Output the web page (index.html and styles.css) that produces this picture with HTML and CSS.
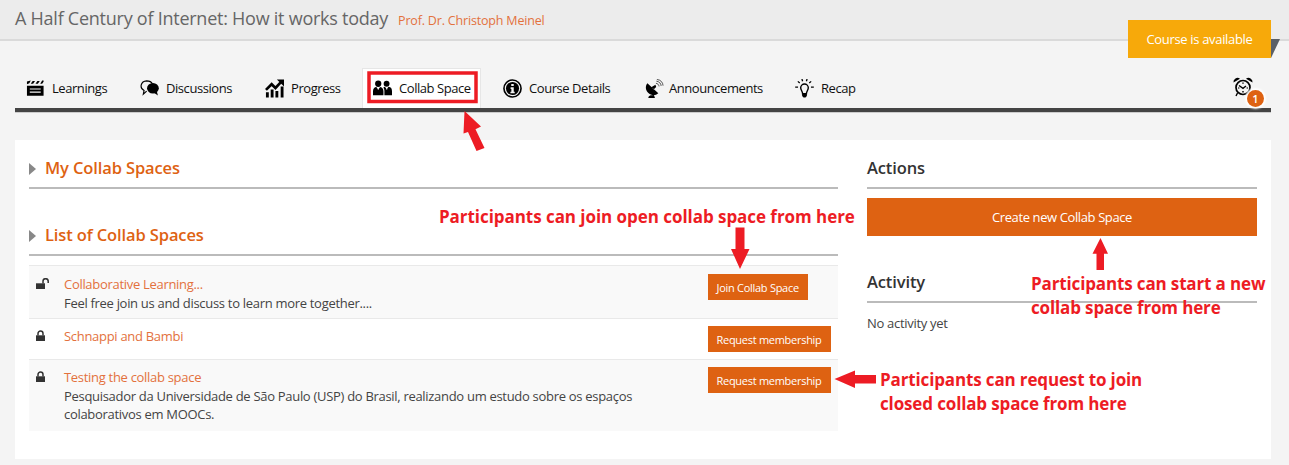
FILE: index.html
```
<!DOCTYPE html>
<html lang="en">
<head>
<meta charset="utf-8">
<title>A Half Century of Internet: How it works today</title>
<link rel="stylesheet" href="styles.css">
</head>
<body>
<header class="course-header">
  <h1 class="course-title">A Half Century of Internet: How it works today</h1>
  <a class="teacher">Prof. Dr. Christoph Meinel</a>
  <div class="ribbon">Course is available</div>
  <i class="ribbon-fold"></i>
</header>

<nav class="course-nav">
  <a class="tab"><svg class="icon" viewBox="0 0 20 20"><path d="M1 7h17.500v10.500H1zM1 2.500l4-1-1.500 3-2.500 1zM7 2h2.500L7.500 5H5zM12 2h2.500l-2 3H10zM17 1.500h1.500V3L17 5h-2z"/><path d="M4 10.500h11.500M4 13.800h11.500" stroke="#f4f4f4" stroke-width="1.100"/></svg>Learnings</a>
  <a class="tab"><svg class="icon" viewBox="0 0 20 20"><path d="M7 12.700 3.500 16l.8-4C-.8 9.500.5 2.500 7 2c3 0 5 1 6 3" fill="none" stroke="#000" stroke-width="1.200"/><ellipse cx="13.600" cy="9.800" rx="6.200" ry="5.500"/><path d="m14 14 4.800 3.300L17.500 12z"/></svg>Discussions</a>
  <a class="tab"><svg class="icon" viewBox="0 0 20 20"><path d="M1 14h3v5.500H1zM6 11h3v8.500H6zM11 12.500h3v7h-3zM16.500 8h3v11.500h-3z"/><path d="m1 11.500 6-6 4 4L17 3" fill="none" stroke="#000" stroke-width="2.800"/><path d="M12.500.5H20V8z"/></svg>Progress</a>
  <a class="tab tab-active"><svg class="icon" viewBox="0 0 20 20"><circle cx="5.500" cy="5" r="3.300"/><circle cx="14.300" cy="5" r="3.100"/><path d="M0 17v-4c0-3 1.500-4.300 3.500-4.500L5.500 11l2-2.500C10 9 11 11 11 13v4zM12 17v-4c0-2-.5-3-1.200-4l1.700-.8 2 2.500 1.800-2.500C19 8.500 20 10 20 13v4z"/><path d="M5.500 9v2.500M14.500 9v2.500" stroke="#fff" stroke-width=".6"/></svg>Collab Space</a>
  <a class="tab"><svg class="icon" viewBox="0 0 20 20"><circle cx="10" cy="10" r="9" fill="none" stroke="#000" stroke-width="1.700"/><circle cx="10" cy="10" r="6.900"/><path d="M8.700 5.300h2.600v2H8.700zM8 8.700h3.300v4.700h1V15H7.800v-1.600h1v-3H8z" fill="#f4f4f4"/></svg>Course Details</a>
  <a class="tab tab-announce"><svg class="icon" viewBox="0 0 20 20"><path d="M2.500 4.500c-4 5 0 12 6 12.500 2.500 0 4-.8 5.500-2zM3.500 20c0-2 1-2.500 2.500-3h3.500l1 3zM7 8.500l4-2.500.8 2.500L9 11z"/><path d="M11.500 4.500c2 .3 3 1.500 3.300 3.300M12 2.300c3 .4 4.800 2.300 5 5M12.500.5c4 .3 6.300 3 6.500 6.500" fill="none" stroke="#222" stroke-width=".8"/></svg>Announcements</a>
  <a class="tab"><svg class="icon" viewBox="0 0 20 20"><path d="M8 15.500c0-2.500-2-3.700-2-6.200a4 4 0 0 1 8 0c0 2.500-2 3.700-2 6.200z" fill="none" stroke="#000" stroke-width="1.500"/><path d="M7.500 15h5v3L11 19.500H9L7.500 18z"/><path d="M.2 8.500h3M16.800 8.500h3M3 2.500l2 1.800M17 2.500l-2 1.800M7.300 0l.7 2.300M12.700 0 12 2.300" stroke="#000" stroke-width="1.400"/></svg>Recap</a>
  <div class="deadline">
    <svg class="clock" viewBox="0 0 20 20"><circle cx="10" cy="10.500" r="7" fill="none" stroke="#000" stroke-width="1.700"/><path d="M.5 5.500A4 4 0 0 1 7 1.800zM19.500 5.500A4 4 0 0 0 13 1.800z"/><path d="m6 8.500 4 2.800L13 9M4.500 16 3 19M15.500 16 17 19M10 5.500v1.300M10 14v1.500M5.300 11h1M13.700 11h1" fill="none" stroke="#000" stroke-width="1.400"/></svg>
    <span class="count">1</span>
  </div>
</nav>

<main class="panel">
  <section class="spaces">
    <h2 class="heading heading-link"><i class="caret"></i>My Collab Spaces</h2>
    <h2 class="heading heading-link heading-list"><i class="caret"></i>List of Collab Spaces</h2>
    <ul class="list">
      <li class="row row-open">
        <svg class="lock" viewBox="0 0 14 12"><path d="M0 5.300h9V11H0z"/><path d="M7 5.500V3.300a2.600 2.600 0 0 1 5.200 0V5" fill="none" stroke="#333" stroke-width="1.500"/></svg>
        <div class="info"><a class="name">Collaborative Learning...</a><p class="about">Feel free join us and discuss to learn more together....</p></div>
        <button class="join">Join Collab Space</button>
      </li>
      <li class="row row-short">
        <svg class="lock" viewBox="0 0 14 12"><path d="M0 5.300h9V11H0z"/><path d="M2 5.500V3.500a2.500 2.500 0 0 1 5 0v2" fill="none" stroke="#333" stroke-width="1.500"/></svg>
        <div class="info"><a class="name">Schnappi and Bambi</a></div>
        <button class="join">Request membership</button>
      </li>
      <li class="row row-tall">
        <svg class="lock" viewBox="0 0 14 12"><path d="M0 5.300h9V11H0z"/><path d="M2 5.500V3.500a2.500 2.500 0 0 1 5 0v2" fill="none" stroke="#333" stroke-width="1.500"/></svg>
        <div class="info"><a class="name">Testing the collab space</a><p class="about">Pesquisador da Universidade de São Paulo (USP) do Brasil, realizando um estudo sobre os espaços<br>colaborativos em MOOCs.</p></div>
        <button class="join">Request membership</button>
      </li>
    </ul>
  </section>
  <aside class="side">
    <h2 class="heading">Actions</h2>
    <button class="create">Create new Collab Space</button>
    <h2 class="heading heading-activity">Activity</h2>
    <p class="empty">No activity yet</p>
  </aside>
</main>

<div class="notes">
  <svg class="arrows" viewBox="0 0 1289 465">
    <rect x="369" y="73" width="107" height="28.500" fill="none" stroke="#ed1c24" stroke-width="3.500"/>
    <path d="M464.500 111 481 126.500 475.500 129.300 484.500 148 476.500 151 468 132 463.500 133.500z"/>
    <path d="M735.500 227.500h9V249h5L740 269l-9-20h4.500z"/>
    <path d="M1100.500 238 1108 253.700h-4V270h-7.500v-16.300h-4z"/>
    <path d="M834.500 379 855 370.500v4.500h21v8.500h-21v4.500z"/>
  </svg>
  <p class="note note-join">Participants can join open collab space from here</p>
  <p class="note note-start">Participants can start a new<br>collab space from here</p>
  <p class="note note-request">Participants can request to join<br>closed collab space from here</p>
</div>
</body>
</html>
```
FILE: styles.css
```
* { box-sizing: border-box; }
body {
  margin: 0;
  height: 465px;
  position: relative;
  overflow: hidden;
  background: #f4f4f4;
  color: #444;
  font: 13px/18.5px "Open Sans", sans-serif;
  letter-spacing: -0.3px;
}
h1, h2, p, ul { margin: 0; padding: 0; }
button { border: 0; padding: 0; font-family: inherit; color: #fff; background: #de6212; }

.course-header {
  position: relative;
  display: flex;
  align-items: baseline;
  gap: 10px;
  height: 41px;
  padding: 5px 15px 0;
  background: #ececec;
  border-bottom: 2px solid #dadada;
}
.course-title { font-size: 18px; line-height: 26px; font-weight: 400; letter-spacing: -0.25px; color: #666; }
.teacher { font-size: 12.5px; letter-spacing: -0.18px; color: #e3713d; }
.ribbon {
  position: absolute;
  left: 1128px;
  top: 20px;
  width: 143px;
  height: 38px;
  background: #f7a90a;
  color: #fff;
  letter-spacing: -0.33px;
  line-height: 38px;
  text-align: center;
}
.ribbon-fold {
  position: absolute;
  left: 1271px;
  top: 39px;
  border-top: 19px solid #5b6067;
  border-right: 9px solid transparent;
}

.course-nav {
  display: grid;
  grid-template-columns: 114px 125px 108px 130px 142px 150px 150px 1fr;
  align-items: end;
  height: 71px;
  margin: 0 18px 0 15px;
  border-bottom: 4px solid #444;
  box-shadow: 0 1px #ccc;
}
.tab {
  display: flex;
  align-items: center;
  gap: 7px;
  height: 40px;
  padding: 0 0 0 11px;
  color: #111;
  letter-spacing: -0.44px;
  white-space: nowrap;
}
.tab-active { width: 119px; background: #fff; border: 1px solid #e6e6e6; border-bottom: 0; padding-left: 10px; }
.tab-announce { gap: 5px; }
.icon { width: 19px; height: 19px; flex: none; }
.deadline { position: relative; justify-self: end; width: 38px; height: 40px; padding-top: 9px; }
.clock { display: block; width: 20px; height: 20px; }
.count {
  position: absolute;
  left: 14px;
  top: 22px;
  width: 17px;
  height: 17px;
  border-radius: 50%;
  background: #de6212;
  box-shadow: 0 0 2px 2px #fff;
  color: #fff;
  font-size: 11px;
  font-weight: 600;
  line-height: 17px;
  letter-spacing: 0;
  text-align: center;
}

.panel {
  display: grid;
  grid-template-columns: 809px 390px;
  column-gap: 29px;
  height: 319px;
  margin: 28px 18px 0 15px;
  padding: 14px 14px 0;
  background: #fff;
}
.heading {
  display: flex;
  align-items: center;
  height: 35px;
  padding-bottom: 4px;
  border-bottom: 2px solid #bbb;
  color: #333;
  font-size: 16.5px;
  font-weight: 600;
  letter-spacing: -0.12px;
}
.heading-link { color: #de6212; }
.heading-list { margin-top: 32px; }
.caret {
  width: 7px;
  margin-right: 9px;
  border-left: 7px solid #888;
  border-top: 6px solid transparent;
  border-bottom: 6px solid transparent;
}
.heading-activity { margin-top: 32px; }
.list { margin-top: 9px; list-style: none; }
.row {
  display: grid;
  grid-template-columns: 28px 643.5px 1fr;
  align-items: start;
  padding: 9px 0 0 7px;
  border-top: 1px solid #e9e9e9;
  background: #f9f9f9;
}
.row-open { height: 53px; }
.row-short { height: 41px; padding-top: 8px; background: #fff; }
.row-tall { height: 72px; padding-top: 8px; }
.lock { width: 14px; height: 12px; margin-top: 3px; fill: #333; }
.name { color: #e3713d; }
.join { justify-self: start; margin-top: -1px; height: 26px; padding: 0 9px; font-size: 11px; letter-spacing: -0.28px; }
.create { display: block; width: 100%; height: 38px; margin-top: 9px; font-size: 13px; letter-spacing: -0.39px; }
.empty { margin-top: 11px; }

.notes { position: absolute; inset: 0; pointer-events: none; }
.arrows { position: absolute; inset: 0; width: 1289px; height: 465px; fill: #ed1c24; }
.note {
  position: absolute;
  color: #ed1c24;
  font-size: 17px;
  font-weight: 700;
  letter-spacing: -0.14px;
  line-height: 24px;
  white-space: nowrap;
}
.note-join { left: 439px; top: 205px; letter-spacing: -0.05px; }
.note-start { left: 1031px; top: 272px; }
.note-request { left: 880px; top: 368px; }
```
